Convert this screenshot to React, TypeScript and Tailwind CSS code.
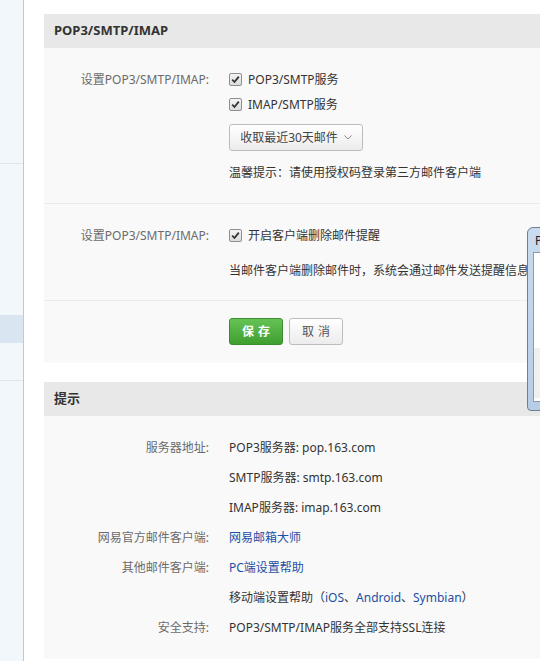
import React from 'react';

const font = { fontFamily: '"Segoe UI", "Noto Sans", "Noto Sans CJK SC", sans-serif' };

function Check() {
  return (
    <span className="inline-flex items-center justify-center w-[13px] h-[13px] border border-[#8f8f8f] rounded-[2px] bg-gradient-to-b from-[#f4f4f4] to-[#dcdcdc] shrink-0">
      <svg width="9" height="9" viewBox="0 0 9 9">
        <path d="M1.2 4.6 L3.5 7 L7.8 1.6" stroke="#333" strokeWidth="1.8" fill="none" />
      </svg>
    </span>
  );
}

function Row({ label, children, h = 'h-[25px]' }: { label?: string; children: React.ReactNode; h?: string }) {
  return (
    <div className={`flex items-center ${h}`}>
      <div className="w-[165px] text-right text-[#6b6b6b] shrink-0">{label}</div>
      <div className="pl-[20px] flex items-center gap-[4px] whitespace-nowrap">{children}</div>
    </div>
  );
}

export default function App() {
  return (
    <div className="flex w-[540px] h-[661px] bg-white overflow-hidden text-[12px] text-[#333]" style={font}>
      {/* sidebar */}
      <div className="w-[24px] shrink-0 bg-[#f2f7fc] border-r border-[#c4c8cc] flex flex-col">
        <div className="h-[163px]" />
        <div className="h-px bg-[#dfe6ee]" />
        <div className="h-[151px]" />
        <div className="h-[28px] bg-[#d9e6f2]" />
        <div className="h-[37px]" />
        <div className="h-px bg-[#dfe6ee]" />
      </div>

      <div className="flex-1 pl-[20px] pt-[14px] relative">
        <div className="w-[600px]">
          <div className="h-[34px] bg-[#e8e8e8] px-[10px] flex items-center font-bold text-[13px] text-[#333]">POP3/SMTP/IMAP</div>
          <div className="bg-[#f9f9f9]">
            <div className="pt-[19px] pb-[18px]">
              <Row label="设置POP3/SMTP/IMAP:">
                <Check />
                <span className="ml-[2px]">POP3/SMTP服务</span>
              </Row>
              <Row>
                <Check />
                <span className="ml-[2px]">IMAP/SMTP服务</span>
              </Row>
              <div className="pl-[185px] mt-[7px]">
                <div className="w-[134px] h-[27px] border border-[#bcbcbc] rounded-[3px] bg-gradient-to-b from-white to-[#ececec] flex items-center justify-center gap-[6px] text-[#444]">
                  收取最近30天邮件
                  <svg width="8" height="5" viewBox="0 0 8 5">
                    <path d="M0.5 0.5 L4 4 L7.5 0.5" stroke="#888" strokeWidth="1" fill="none" />
                  </svg>
                </div>
              </div>
              <div className="pl-[185px] mt-[9px] h-[25px] flex items-center">温馨提示：请使用授权码登录第三方邮件客户端</div>
            </div>
            <div className="border-t border-[#ebebeb] pt-[19px] pb-[17px]">
              <Row label="设置POP3/SMTP/IMAP:">
                <Check />
                <span className="ml-[2px]">开启客户端删除邮件提醒</span>
              </Row>
              <div className="pl-[185px] mt-[10px] h-[25px] flex items-center whitespace-nowrap">当邮件客户端删除邮件时，系统会通过邮件发送提醒信息</div>
            </div>
            <div className="border-t border-[#ebebeb] pt-[17px] pb-[18px] pl-[185px] flex gap-[6px]">
              <button className="w-[54px] h-[27px] rounded-[3px] border border-[#3a8c2c] bg-gradient-to-b from-[#66c255] to-[#3e9f2f] text-white font-bold tracking-[4px] pl-[4px]">保存</button>
              <button className="w-[54px] h-[27px] rounded-[3px] border border-[#bcbcbc] bg-gradient-to-b from-white to-[#ececec] text-[#555] tracking-[4px] pl-[4px]">取消</button>
            </div>
          </div>

          <div className="h-[34px] bg-[#e8e8e8] px-[10px] flex items-center font-bold text-[13px] text-[#333] mt-[19px]">提示</div>
          <div className="bg-[#f9f9f9] pt-[17px] pb-[16px]">
            <Row label="服务器地址:" h="h-[30px]">POP3服务器: pop.163.com</Row>
            <Row h="h-[30px]">SMTP服务器: smtp.163.com</Row>
            <Row h="h-[30px]">IMAP服务器: imap.163.com</Row>
            <Row label="网易官方邮件客户端:" h="h-[30px]">
              <a className="text-[#1d4fa3]">网易邮箱大师</a>
            </Row>
            <Row label="其他邮件客户端:" h="h-[30px]">
              <a className="text-[#1d4fa3]">PC端设置帮助</a>
            </Row>
            <Row h="h-[30px]">
              <span>
                移动端设置帮助（<a className="text-[#1d4fa3]">iOS</a>、<a className="text-[#1d4fa3]">Android</a>、<a className="text-[#1d4fa3]">Symbian</a>）
              </span>
            </Row>
            <Row label="安全支持:" h="h-[30px]">POP3/SMTP/IMAP服务全部支持SSL连接</Row>
          </div>
        </div>

        {/* overlapping window edge */}
        <div className="absolute left-[503px] top-[227px] w-[40px] h-[184px] rounded-tl-[6px] rounded-bl-[4px] border border-[#6f7f91] bg-gradient-to-b from-[#c9dcef] to-[#b6cde6] pl-[5px] pt-[2px]">
          <div className="h-[22px] text-[12px] text-[#222] leading-[22px] pl-[2px]">P</div>
          <div className="bg-white border border-[#8d9aa8] h-[150px]">
            <div className="h-[95px]" />
            <div className="h-[50px] bg-[#f0f0f0]" />
          </div>
        </div>
      </div>
    </div>
  );
}
